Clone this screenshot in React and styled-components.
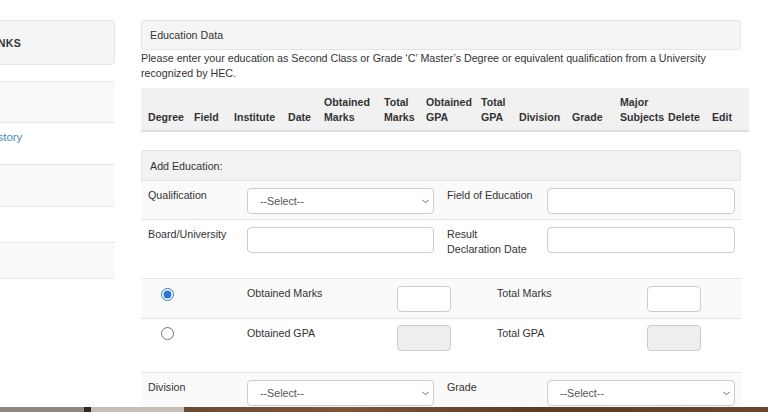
import React from "react"
import styled, { createGlobalStyle } from "styled-components"
import { ChevronDown } from "lucide-react"

const GlobalStyle = createGlobalStyle`
  html, body {
    margin: 0;
    padding: 0;
    background: #ffffff;
  }
  body {
    font-family: "Liberation Sans", Arial, sans-serif;
    font-size: 10.7px;
    color: #333333;
  }
`

const Page = styled.div`
  height: 412px;
  display: flex;
  flex-direction: column;
  overflow: hidden;
`

const Content = styled.div`
  flex: 1;
  min-height: 0;
  display: flex;
  overflow: hidden;
`

const Sidebar = styled.aside`
  width: 115px;
  flex: none;
  overflow: hidden;
  padding-top: 20px;
`

// the sidebar is scrolled partly out of view, as in the screenshot
const SidebarInner = styled.div`
  margin-left: -100px;
  width: 215px;
`

const SideHeading = styled.div`
  height: 45px;
  box-sizing: border-box;
  display: flex;
  align-items: center;
  padding-left: 47px;
  background: #f5f5f5;
  border: 1px solid #e6e6e6;
  border-radius: 0 4px 4px 0;
  font-weight: 700;
  font-size: 10.6px;
  letter-spacing: 0.4px;
  color: #333;
  margin-bottom: 16px;
`

const SideItem = styled.div`
  height: ${(p) => p.h}px;
  box-sizing: border-box;
  padding: 7px 0 0 33px;
  line-height: 14px;
  background: ${(p) => (p.shade ? "#fafafa" : "#ffffff")};
  border-top: 1px solid #e6e6e6;
  border-bottom: ${(p) => (p.last ? "1px solid #e6e6e6" : "none")};
  color: ${(p) => (p.active ? "#4a8ac9" : "#333")};
  font-size: 11.4px;
`

const Main = styled.main`
  width: 600px;
  flex: none;
  margin-left: 26px;
  padding-top: 20px;
`

const PanelTitle = styled.div`
  box-sizing: border-box;
  display: flex;
  align-items: center;
  padding-left: 8px;
  background: ${(p) => (p.dark ? "#f2f2f2" : "#f5f5f5")};
  border: 1px solid #e4e4e4;
  border-radius: ${(p) => (p.dark ? "3px 3px 0 0" : "3px")};
  margin-top: ${(p) => p.mt || 0}px;
  height: ${(p) => p.h || 30}px;
`

const Note = styled.p`
  margin: 1px 0 0;
  line-height: 15px;
`

const Table = styled.table`
  width: 608px;
  table-layout: fixed;
  border-collapse: collapse;
  margin-top: 7px;
`

const Th = styled.th`
  width: ${(p) => p.w}px;
  height: 43px;
  box-sizing: border-box;
  padding: 0 0 5px ${(p) => p.pl || 5}px;
  vertical-align: bottom;
  text-align: left;
  font-weight: 700;
  font-size: 10.6px;
  line-height: 15px;
  background: #f1f1f1;
  border-bottom: 2px solid #dedede;
`

const FormRow = styled.div`
  display: grid;
  grid-template-columns: ${(p) => p.cols};
  align-items: start;
  height: ${(p) => p.h}px;
  box-sizing: border-box;
  padding-top: ${(p) => p.pt || 7}px;
  background: ${(p) => (p.shade ? "#fafafa" : "#ffffff")};
  border-bottom: 1px solid #e4e4e4;
`

const Label = styled.label`
  line-height: 15px;
  padding-left: ${(p) => p.pl || 0}px;
  margin-top: ${(p) => p.mt || 0}px;
`

const TextInput = styled.input`
  width: ${(p) => p.w || 187}px;
  height: 26px;
  box-sizing: border-box;
  border: 1px solid #cccccc;
  border-radius: 4px;
  background: ${(p) => (p.disabled ? "#eeeeee" : "#ffffff")};
  font: inherit;
  padding: 0 10px;
  margin: 0;
`

const SelectWrap = styled.div`
  position: relative;
  width: ${(p) => p.w || 187}px;
  height: 26px;
`

const Select = styled.select`
  appearance: none;
  width: 100%;
  height: 100%;
  box-sizing: border-box;
  border: 1px solid #cccccc;
  border-radius: 4px;
  background: #ffffff;
  font: inherit;
  color: #555555;
  padding: 0 0 0 12px;
  margin: 0;
`

const Caret = styled(ChevronDown)`
  position: absolute;
  right: 3px;
  top: 8px;
  color: #555;
  pointer-events: none;
`

const RadioCell = styled.div`
  padding-left: 20px;
  padding-top: 1px;
  height: 15px;
  display: flex;
  align-items: center;
`

const Radio = styled.input`
  width: 13px;
  height: 13px;
  margin: 0;
  accent-color: #2f74d0;
`

const Taskbar = styled.div`
  height: 5px;
  flex: none;
  background: linear-gradient(
    90deg,
    #8e8880 0%,
    #8e8880 11%,
    #2e2620 11%,
    #2e2620 11.8%,
    #c4beb4 11.8%,
    #c4beb4 24%,
    #6d4a33 24%,
    #7d5639 45%,
    #5c3b27 70%,
    #6b4630 100%
  );
`

const headers = [
  { t: "Degree", w: 48, pl: 7 },
  { t: "Field", w: 40 },
  { t: "Institute", w: 54 },
  { t: "Date", w: 36 },
  { t: "Obtained Marks", w: 60 },
  { t: "Total Marks", w: 42 },
  { t: "Obtained GPA", w: 55 },
  { t: "Total GPA", w: 38 },
  { t: "Division", w: 53 },
  { t: "Grade", w: 48 },
  { t: "Major Subjects", w: 48 },
  { t: "Delete", w: 44 },
  { t: "Edit", w: 42 },
]

const sideLinks = [
  { t: "Profile", h: 41, shade: true },
  { t: "Education History", h: 42, active: true },
  { t: "Experience", h: 42, shade: true },
  { t: "Preview", h: 36 },
  { t: "Logout", h: 37, shade: true, last: true },
]

const fieldCols = "106px 187px 113px 188px"
const radioCols = "106px 150px 100px 150px 54px"

function Dropdown({ w }) {
  return (
    <SelectWrap w={w}>
      <Select defaultValue="">
        <option value="">--Select--</option>
      </Select>
      <Caret size={11} strokeWidth={2} />
    </SelectWrap>
  )
}

export default function App() {
  return (
    <Page>
      <GlobalStyle />
      <Content>
        <Sidebar>
          <SidebarInner>
            <SideHeading>QUICK LINKS</SideHeading>
            {sideLinks.map((l) => (
              <SideItem key={l.t} h={l.h} shade={l.shade} active={l.active} last={l.last}>
                {l.t}
              </SideItem>
            ))}
          </SidebarInner>
        </Sidebar>

        <Main>
          <PanelTitle>Education Data</PanelTitle>
          <Note>
            Please enter your education as Second Class or Grade ‘C’ Master’s Degree or equivalent
            qualification from a University recognized by HEC.
          </Note>

          <Table>
            <thead>
              <tr>
                {headers.map((h) => (
                  <Th key={h.t} w={h.w} pl={h.pl}>
                    {h.t}
                  </Th>
                ))}
              </tr>
            </thead>
          </Table>

          <PanelTitle dark mt={18} h={31}>
            Add Education:
          </PanelTitle>

          <FormRow cols={fieldCols} h={39} shade>
            <Label pl={7}>Qualification</Label>
            <Dropdown />
            <Label pl={13}>Field of Education</Label>
            <TextInput w={188} />
          </FormRow>

          <FormRow cols={fieldCols} h={59}>
            <Label pl={7}>Board/University</Label>
            <TextInput />
            <Label pl={13}>
              Result
              <br />
              Declaration Date
            </Label>
            <TextInput w={188} />
          </FormRow>

          <FormRow cols={radioCols} h={40} shade>
            <RadioCell>
              <Radio type="radio" name="mode" defaultChecked />
            </RadioCell>
            <Label>Obtained Marks</Label>
            <TextInput w={54} />
            <Label>Total Marks</Label>
            <TextInput w={54} />
          </FormRow>

          <FormRow cols={radioCols} h={54} pt={6}>
            <RadioCell>
              <Radio type="radio" name="mode" />
            </RadioCell>
            <Label mt={1}>Obtained GPA</Label>
            <TextInput w={54} disabled />
            <Label mt={1}>Total GPA</Label>
            <TextInput w={54} disabled />
          </FormRow>

          <FormRow cols={fieldCols} h={40} shade>
            <Label pl={7}>Division</Label>
            <Dropdown />
            <Label pl={13}>Grade</Label>
            <Dropdown w={188} />
          </FormRow>
        </Main>
      </Content>
      <Taskbar />
    </Page>
  )
}
